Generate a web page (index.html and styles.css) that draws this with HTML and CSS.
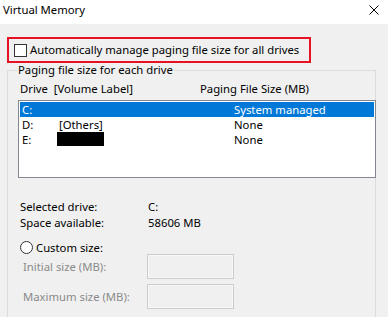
FILE: index.html
```html
<!DOCTYPE html>
<html>
<head>
<meta charset="utf-8">
<link rel="stylesheet" href="styles.css">
</head>
<body>
<div class="window">
  <div class="titlebar">
    <span class="title">Virtual Memory</span>
    <svg class="close" width="10" height="10" viewBox="0 0 10 10"><path d="M0.5 0.5 L9.5 9.5 M9.5 0.5 L0.5 9.5" stroke="#000" stroke-width="1" fill="none"/></svg>
  </div>
  <div class="body">
    <div class="highlight">
      <span class="checkbox"></span>
      <span class="label">Automatically manage paging file size for all drives</span>
    </div>
    <fieldset class="group">
      <legend class="legend">Paging file size for each drive</legend>
      <div class="colhead">
        <span class="col1">Drive&nbsp; [Volume Label]</span>
        <span class="col2">Paging File Size (MB)</span>
      </div>
      <div class="list">
        <div class="row selected"><span class="c-drive">C:</span><span class="c-label"></span><span class="c-size">System managed</span></div>
        <div class="row"><span class="c-drive">D:</span><span class="c-label">[Others]</span><span class="c-size">None</span></div>
        <div class="row"><span class="c-drive">E:</span><span class="c-label"><span class="redact"></span></span><span class="c-size">None</span></div>
      </div>
      <div class="info">
        <div class="info-row"><span class="info-key">Selected drive:</span><span>C:</span></div>
        <div class="info-row"><span class="info-key">Space available:</span><span>58606 MB</span></div>
      </div>
      <div class="radio-row">
        <span class="radio"></span><span>Custom size:</span>
      </div>
      <div class="field-row">
        <span class="field-label">Initial size (MB):</span><span class="input"></span>
      </div>
      <div class="field-row">
        <span class="field-label">Maximum size (MB):</span><span class="input"></span>
      </div>
    </fieldset>
  </div>
</div>
</body>
</html>
```

FILE: styles.css
```css
html, body {
  margin: 0;
  padding: 0;
}
body {
  width: 388px;
  height: 317px;
  overflow: hidden;
  background: #f0f0f0;
  font-family: "Noto Sans", "Open Sans", sans-serif;
  font-size: 11.3px;
  color: #000;
  white-space: nowrap;
}
.window {
  width: 388px;
  height: 317px;
  overflow: hidden;
}
.titlebar {
  height: 24px;
  background: #fff;
  display: flex;
  align-items: center;
  justify-content: space-between;
  padding: 0 9px 0 3px;
  box-sizing: border-box;
}
.title {
  line-height: 16px;
  margin-top: -4px;
}
.close {
  display: block;
  margin-top: -5px;
}
.body {
  padding-top: 13px;
}
.highlight {
  margin-left: 7px;
  width: 304px;
  height: 26px;
  box-sizing: border-box;
  border: 2px solid #e81123;
  display: flex;
  align-items: center;
  padding-left: 5px;
}
.checkbox {
  width: 13px;
  height: 13px;
  box-sizing: border-box;
  border: 1px solid #333;
  background: #fff;
  margin-right: 3px;
}
.label {
  line-height: 16px;
}
.group {
  margin: 0 0 0 7px;
  width: 369px;
  height: 300px;
  box-sizing: border-box;
  border: 1px solid #dcdcdc;
  padding: 0 0 0 10px;
  min-width: 0;
}
.legend {
  padding: 0 1px;
  margin-left: -1px;
  line-height: 14px;
}
.colhead {
  display: flex;
  height: 16px;
  line-height: 16px;
  margin-top: 4px;
  padding-left: 2px;
}
.col1 {
  width: 180px;
}
.list {
  margin-top: 3px;
  width: 358px;
  height: 78px;
  box-sizing: border-box;
  border: 1px solid #828790;
  background: #fff;
  padding: 1px;
}
.row {
  display: flex;
  height: 15px;
  line-height: 15px;
  padding-left: 2px;
}
.row.selected {
  background: #0078d7;
  color: #fff;
}
.c-drive {
  width: 37px;
}
.c-label {
  width: 175px;
}
.redact {
  display: inline-block;
  width: 47px;
  height: 14px;
  background: #000;
  vertical-align: top;
  margin-left: -2px;
}
.info {
  margin-top: 21px;
  padding-left: 2px;
}
.info-row {
  display: flex;
  height: 16px;
  line-height: 16px;
}
.info-key {
  width: 128px;
}
.radio-row {
  display: flex;
  align-items: center;
  margin-top: 8px;
  height: 16px;
  padding-left: 2px;
}
.radio {
  width: 13px;
  height: 13px;
  box-sizing: border-box;
  border: 1px solid #333;
  border-radius: 50%;
  background: #fff;
  margin-right: 3px;
}
.field-row {
  display: flex;
  align-items: center;
  margin-top: -1px;
  padding-left: 5px;
  color: #8a8a8a;
}
.field-row + .field-row {
  margin-top: 5px;
}
.field-label {
  width: 124px;
}
.input {
  width: 87px;
  height: 25px;
  box-sizing: border-box;
  border: 1px solid #cccccc;
  box-shadow: inset 0 0 0 1px #f7f7f7;
  background: #f0f0f0;
}
```
